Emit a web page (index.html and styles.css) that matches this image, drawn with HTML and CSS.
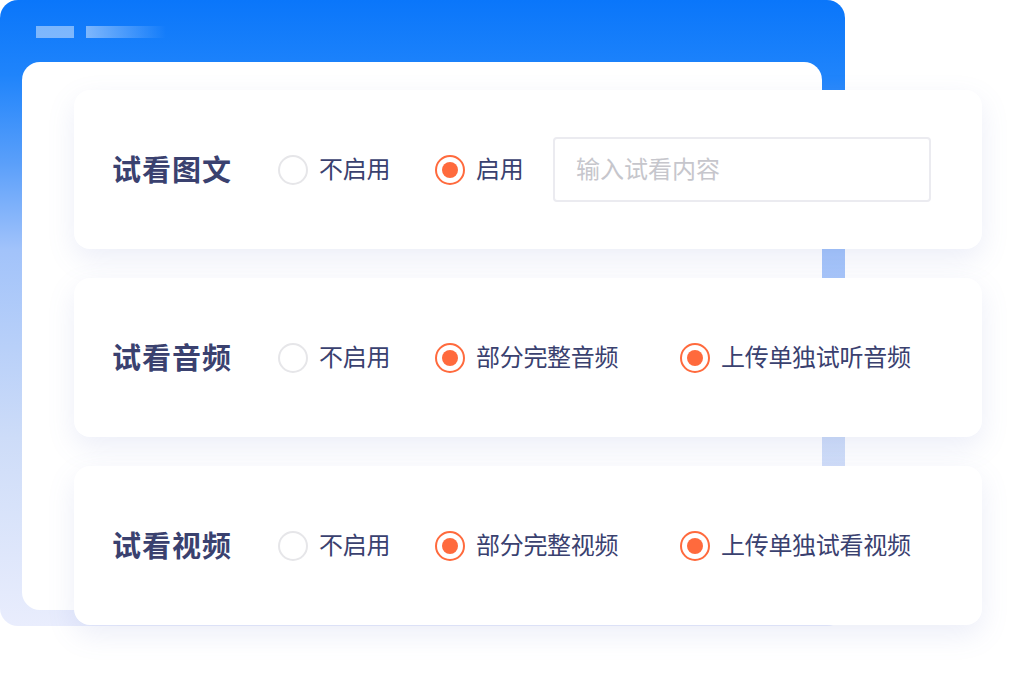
FILE: index.html
```html
<!DOCTYPE html>
<html lang="zh-CN">
<head>
<meta charset="utf-8">
<title>试看设置</title>
<link rel="stylesheet" href="styles.css">
</head>
<body>
<div class="stage">
  <div class="window">
    <div class="window-bar">
      <span class="bar bar-a"></span>
      <span class="bar bar-b"></span>
    </div>
    <div class="window-body"></div>
  </div>
  <div class="cards">
    <div class="card">
      <div class="card-title">试看图文</div>
      <div class="opt opt-1"><span class="radio"></span><span class="label">不启用</span></div>
      <div class="opt opt-short"><span class="radio on"></span><span class="label">启用</span></div>
      <div class="input">输入试看内容</div>
    </div>
    <div class="card">
      <div class="card-title">试看音频</div>
      <div class="opt opt-1"><span class="radio"></span><span class="label">不启用</span></div>
      <div class="opt opt-2"><span class="radio on"></span><span class="label">部分完整音频</span></div>
      <div class="opt"><span class="radio on"></span><span class="label">上传单独试听音频</span></div>
    </div>
    <div class="card">
      <div class="card-title">试看视频</div>
      <div class="opt opt-1"><span class="radio"></span><span class="label">不启用</span></div>
      <div class="opt opt-2"><span class="radio on"></span><span class="label">部分完整视频</span></div>
      <div class="opt"><span class="radio on"></span><span class="label">上传单独试看视频</span></div>
    </div>
  </div>
</div>
</body>
</html>
```

FILE: styles.css
```css
* { box-sizing: border-box; }
html, body { margin: 0; padding: 0; background: #ffffff; }
body {
  font-family: "Noto Sans CJK SC", "Noto Sans", sans-serif;
  width: 1026px;
  height: 684px;
  overflow: hidden;
}
.stage {
  display: grid;
  width: 1026px;
  height: 684px;
}
.window {
  grid-area: 1 / 1;
  width: 845px;
  height: 626px;
  border-radius: 18px;
  background: linear-gradient(180deg, #0a76fa 0%, #1f84fb 12%, #5a9ffa 26%, #a2c3fa 40%, #cddcf8 70%, #e9edfd 100%);
  display: flex;
  flex-direction: column;
}
.window-bar {
  height: 62px;
  display: flex;
  gap: 12px;
  padding: 26px 0 0 36px;
}
.bar { display: block; height: 12px; }
.bar-a { width: 38px; background: rgba(255, 255, 255, 0.45); }
.bar-b { width: 80px; background: linear-gradient(90deg, rgba(255,255,255,0.45), rgba(255,255,255,0)); }
.window-body {
  margin-left: 22px;
  width: 800px;
  height: 548px;
  border-radius: 18px;
  background: #ffffff;
}
.cards {
  grid-area: 1 / 1;
  margin: 90px 0 0 74px;
  width: 908px;
  display: flex;
  flex-direction: column;
  gap: 29px;
  align-self: start;
}
.card {
  height: 159px;
  background: #ffffff;
  border-radius: 16px;
  box-shadow: 0 10px 28px rgba(110, 120, 200, 0.13);
  display: flex;
  align-items: center;
  padding-left: 38px;
}
.card-title {
  width: 166px;
  font-size: 29px;
  line-height: 1;
  font-weight: 700;
  color: #3a416f;
  letter-spacing: 1px;
  padding-bottom: 3px;
}
.opt {
  display: flex;
  align-items: center;
  gap: 11px;
  font-size: 24px;
  color: #3a416f;
}
.label { line-height: 1; padding-bottom: 3px; letter-spacing: -0.3px; }
.opt-1 { width: 157px; }
.opt-2 { width: 245px; }
.opt-short { width: 118px; }
.radio {
  width: 30px;
  height: 30px;
  border-radius: 50%;
  border: 2px solid #e6e6e9;
  display: flex;
  align-items: center;
  justify-content: center;
  flex: none;
}
.radio.on { border-color: #ff6a3d; }
.radio.on::after {
  content: "";
  width: 16px;
  height: 16px;
  border-radius: 50%;
  background: #ff6a3d;
}
.input {
  width: 378px;
  height: 65px;
  border: 2px solid #ebebf0;
  border-radius: 4px;
  display: flex;
  align-items: center;
  padding: 0 0 3px 21px;
  font-size: 24px;
  line-height: 1;
  color: #c6c6cc;
}
```
